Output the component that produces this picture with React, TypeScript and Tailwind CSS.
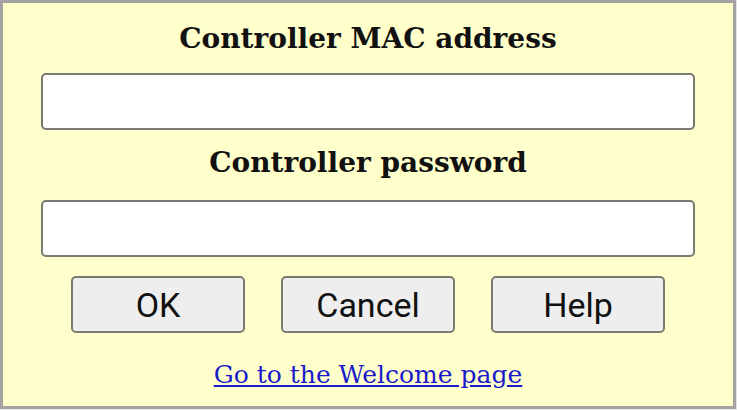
export default function App() {
  return (
    <div className="w-[737px] h-[410px] bg-[#e4e4e4]">
      <div className="w-[736px] h-[409px] border-[3px] border-[#a3a3a3] bg-[#ffffcc] flex flex-col items-center px-[38px]">
        <h1 className="mt-[16px] h-[40px] text-[28px] leading-[40px] font-bold text-[#111] font-['DejaVu_Serif',serif]">
          Controller MAC address
        </h1>
        <input
          type="text"
          className="mt-[14px] w-full h-[57px] rounded-[5px] border-2 border-[#7a7a72] bg-white"
        />
        <h2 className="mt-[13px] h-[40px] text-[28px] leading-[40px] font-bold text-[#111] font-['DejaVu_Serif',serif]">
          Controller password
        </h2>
        <input
          type="password"
          className="mt-[17px] w-full h-[57px] rounded-[5px] border-2 border-[#7a7a72] bg-white"
        />
        <div className="mt-[19px] flex gap-[36px]">
          {["OK", "Cancel", "Help"].map((label) => (
            <button
              key={label}
              className="w-[174px] h-[57px] rounded-[5px] border-2 border-[#7a7a72] bg-[#eeeeee] text-[34px] leading-none text-[#111] font-['Roboto',sans-serif]"
            >
              {label}
            </button>
          ))}
        </div>
        <a
          href="#"
          className="mt-[26px] text-[25px] leading-[32px] text-[#1a1acc] underline font-['DejaVu_Serif',serif]"
        >
          Go to the Welcome page
        </a>
      </div>
    </div>
  );
}
